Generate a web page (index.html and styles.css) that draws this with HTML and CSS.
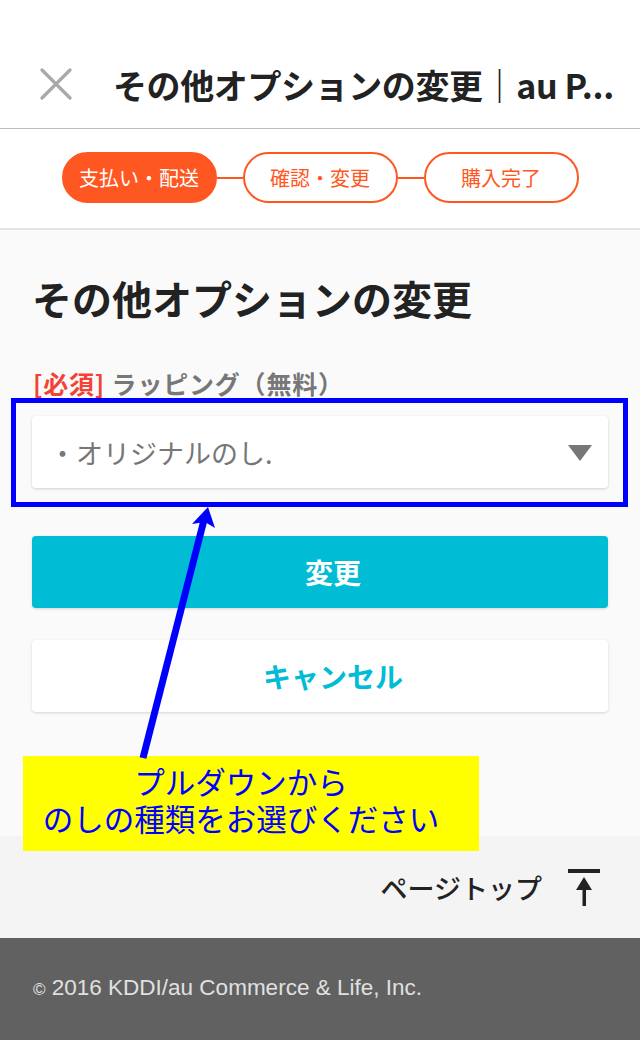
FILE: index.html
```html
<!DOCTYPE html>
<html lang="ja">
<head>
<meta charset="utf-8">
<title>その他オプションの変更</title>
<link rel="stylesheet" href="styles.css">
</head>
<body>
<div class="page">
  <header class="header">
    <svg class="close" width="32" height="32" viewBox="0 0 32 32"><path d="M2 2 L30 30 M30 2 L2 30" stroke="#a8a8a8" stroke-width="3.2" stroke-linecap="round" fill="none"/></svg>
    <div class="title">その他オプションの変更｜au P...</div>
  </header>
  <nav class="steps">
    <div class="pill pill-active">支払い・配送</div>
    <div class="connector"></div>
    <div class="pill">確認・変更</div>
    <div class="connector"></div>
    <div class="pill">購入完了</div>
  </nav>
  <main class="main">
    <h1 class="heading">その他オプションの変更</h1>
    <div class="label"><span class="req">[必須]</span> ラッピング（無料）</div>
    <div class="select">
      <span class="select-text">・オリジナルのし.</span>
      <svg class="caret" width="24" height="16" viewBox="0 0 24 16"><path d="M0 0 H24 L12 16 Z" fill="#777"/></svg>
    </div>
    <button class="btn btn-primary">変更</button>
    <button class="btn btn-cancel">キャンセル</button>
  </main>
  <div class="pagetop">
    <span class="pagetop-text">ページトップ</span>
    <svg class="pagetop-icon" width="32" height="38" viewBox="0 0 32 38"><rect x="0" y="0" width="32" height="4" fill="#222"/><rect x="14.5" y="14" width="3.5" height="23" fill="#222"/><path d="M16 8 L24 21 H8 Z" fill="#222"/></svg>
  </div>
  <footer class="footer"><span class="copy">©</span> 2016 KDDI/au Commerce &amp; Life, Inc.</footer>

  <div class="note-rect"></div>
  <div class="note-box"><div class="note-line">プルダウンから</div><div class="note-line">のしの種類をお選びください</div></div>
  <svg class="note-arrow" width="640" height="1040" viewBox="0 0 640 1040"><line x1="143" y1="758" x2="204" y2="520" stroke="#0000ff" stroke-width="7"/><path d="M208 507 L215 528 L205 522 L192 524 Z" fill="#0000ff"/></svg>
</div>
</body>
</html>
```

FILE: styles.css
```css
* { box-sizing: border-box; }
body { margin: 0; font-family: "Noto Sans CJK JP", "Noto Sans", sans-serif; background: #fafafa; }
.page { position: relative; width: 640px; height: 1040px; overflow: hidden; background: #fafafa; }

.header { height: 129px; padding-top: 40px; display: flex; align-items: center; background: #fff; border-bottom: 1px solid #bdbdbd; }
.close { margin-left: 40px; flex: none; }
.title { margin-left: 41px; font-size: 34px; font-weight: 700; color: #222; white-space: nowrap; letter-spacing: -0.4px; }

.steps { height: 101px; display: flex; align-items: center; justify-content: center; background: #fff; border-bottom: 2px solid #e4e4e4; padding-bottom: 2px; }
.pill { width: 155px; height: 51px; border: 2px solid #ff5722; border-radius: 26px; display: flex; align-items: center; justify-content: center; font-size: 20px; color: #ff5722; background: #fff; }
.pill-active { background: #ff5722; color: #fff; }
.connector { width: 26px; height: 2px; background: #ff5722; }

.main { padding: 42px 32px 124px; }
.heading { margin: 0; font-size: 40px; line-height: 52px; font-weight: 700; color: #222; }
.label { margin-top: 43px; font-size: 25px; line-height: 32px; font-weight: 700; color: #777; letter-spacing: 0.8px; padding-left: 1px; }
.req { color: #f44336; }
.select { margin-top: 17px; height: 72px; background: #fff; border-radius: 4px; box-shadow: 0 1px 3px rgba(0,0,0,0.18); display: flex; align-items: center; justify-content: space-between; padding: 0 16px 0 17px; }
.select-text { font-size: 27px; color: #777; }
.caret { margin-top: 2px; }
.btn { display: block; width: 100%; height: 72px; border: none; border-radius: 4px; font-family: inherit; font-size: 28px; font-weight: 700; padding: 0 0 0 26px; box-shadow: 0 1px 3px rgba(0,0,0,0.15); }
.btn-primary { margin-top: 48px; background: #00bcd4; color: #fff; }
.btn-cancel { margin-top: 32px; background: #fff; color: #00bcd4; }

.pagetop { height: 102px; background: #f4f4f4; display: flex; align-items: center; justify-content: flex-end; padding-right: 40px; }
.pagetop-text { font-size: 27px; font-weight: 500; color: #222; }
.pagetop-icon { margin-left: 26px; margin-top: 2px; }

.footer { height: 102px; background: #616161; color: #e0e0e0; font-family: "Liberation Sans", Arial, sans-serif; font-size: 22.5px; display: flex; align-items: center; padding: 0 0 2px 33px; white-space: pre; }
.copy { font-size: 17px; margin-top: 4px; }

.note-rect { position: absolute; left: 11px; top: 398px; width: 617px; height: 109px; border: 5px solid #0000ff; }
.note-box { position: absolute; left: 23px; top: 756px; width: 456px; height: 95px; background: #ffff00; color: #0000ff; font-size: 30.5px; text-align: center; padding: 7px 20px 0 0; }
.note-line { height: 37px; line-height: 37px; }
.note-arrow { position: absolute; left: 0; top: 0; pointer-events: none; }
```
